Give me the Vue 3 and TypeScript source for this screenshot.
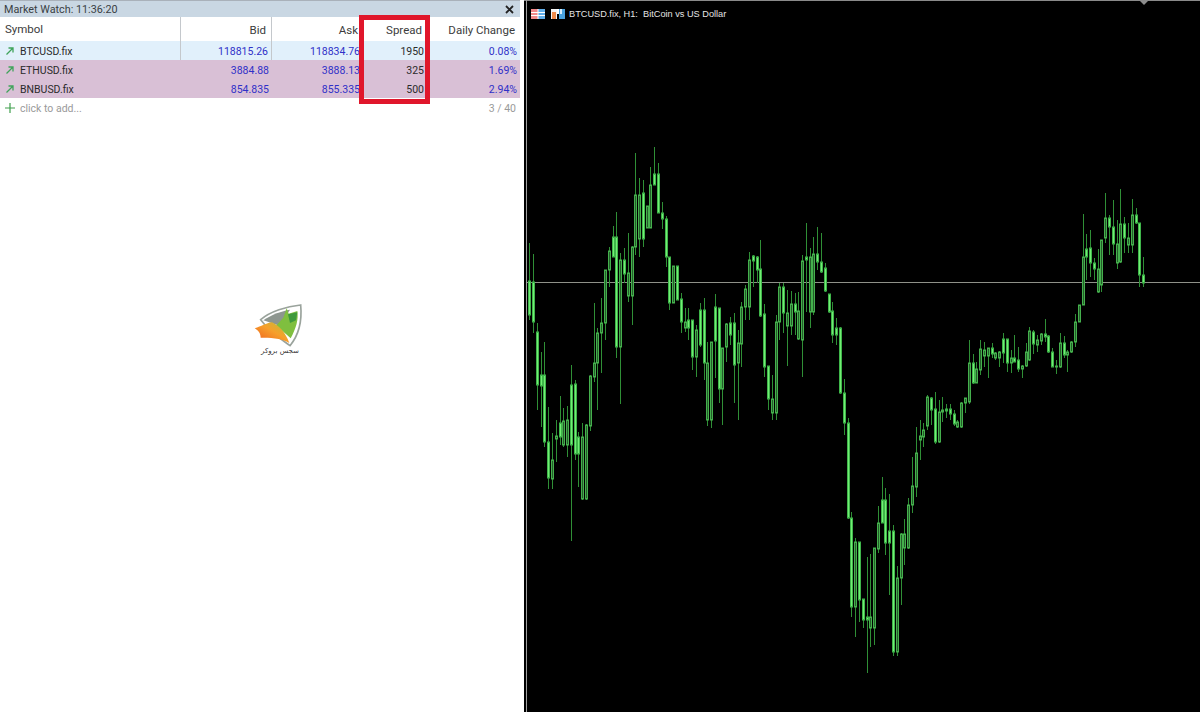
<template>
  <div class="page">
    <section class="watch">
      <div class="title-bar">
        <span>Market Watch: 11:36:20</span>
        <svg class="close" width="9" height="9" viewBox="0 0 9 9"><path d="M1 1l7 7M8 1l-7 7" /></svg>
      </div>

      <div class="grid head">
        <div class="cell sym">Symbol</div>
        <div class="cell num">Bid</div>
        <div class="cell num">Ask</div>
        <div class="cell num">Spread</div>
        <div class="cell num">Daily Change</div>
      </div>

      <div v-for="row in rows" :key="row.symbol" class="grid row" :class="{ active: row.active }">
        <div class="cell sym">
          <svg class="arrow" width="10" height="10" viewBox="0 0 10 10"><path d="M1.5 8.5L8 2M3.5 2H8v4.5" /></svg>
          {{ row.symbol }}
        </div>
        <div class="cell num blue">{{ row.bid }}</div>
        <div class="cell num blue">{{ row.ask }}</div>
        <div class="cell num">{{ row.spread }}</div>
        <div class="cell num blue">{{ row.change }}</div>
      </div>

      <div class="add-row">
        <span class="add-label">
          <svg class="plus" width="10" height="10" viewBox="0 0 10 10"><path d="M5 0v10M0 5h10" /></svg>
          click to add...
        </span>
        <span>3 / 40</span>
      </div>

      <div class="highlight"></div>

      <div class="logo">
        <svg width="80" height="52" viewBox="0 0 240 156">
          <defs>
            <linearGradient id="wing" x1="0" y1="1" x2="1" y2="0">
              <stop offset="0" stop-color="#ee5a1c" />
              <stop offset="0.55" stop-color="#f6a02c" />
              <stop offset="1" stop-color="#b7c23a" />
            </linearGradient>
          </defs>
          <path d="M62 74C90 50 140 34 182 30C186 72 178 118 150 152C120 130 90 112 62 74Z" fill="#fff" stroke="#9aa39c" stroke-width="5" />
          <path d="M70 76C95 58 125 48 150 44L118 92Z" fill="#8d968f" />
          <path d="M130 68L140 40L146 56L172 48C176 74 168 100 152 130C138 116 122 104 108 92Z" fill="#7fbf3f" />
          <path d="M144 58L172 52L168 76L150 84Z" fill="#3f9a3c" />
          <path d="M44 100C64 94 78 84 96 82C118 92 136 112 148 144C122 128 88 128 62 128C62 114 54 106 44 100Z" fill="url(#wing)" />
        </svg>
        <span class="logo-text">سجس بروکر</span>
      </div>
    </section>

    <section class="chart">
      <svg class="candles" width="676" height="712" viewBox="524 0 676 712">
        <line x1="526.5" y1="0" x2="526.5" y2="712" class="edge-line" />
        <line x1="527" y1="282.5" x2="1200" y2="282.5" class="price-line" />
        <g v-for="c in candles" :key="c.x">
          <line :x1="c.x" :x2="c.x" :y1="c.high" :y2="c.low" class="wick" />
          <rect
            :x="c.x - 1"
            :y="c.top"
            width="2"
            :height="c.height"
            :class="c.down ? 'body-down' : 'body-up'"
          />
        </g>
        <path d="M1139 0h10l-5 5z" fill="#8c8c8c" />
      </svg>

      <div class="chart-title">
        <svg width="14" height="10" viewBox="0 0 14 10">
          <rect x="0" y="0" width="7" height="10" fill="#f08a8a" />
          <rect x="7" y="0" width="7" height="10" fill="#62aee8" />
          <path d="M0 3.5h14M0 6.5h14M7 0v10" stroke="#fff" />
        </svg>
        <svg width="14" height="10" viewBox="0 0 14 10">
          <rect x="0" y="0" width="6" height="10" fill="#f4f4f4" />
          <rect x="8" y="0" width="6" height="10" fill="#4aa3e0" />
          <rect x="1" y="3" width="4" height="7" fill="#ee8a4a" />
          <rect x="6" y="0" width="2" height="5" fill="#fff" />
          <rect x="9" y="0" width="2" height="5" fill="#d8eefb" />
        </svg>
        <span>BTCUSD.fix, H1:&nbsp; BitCoin vs US Dollar</span>
      </div>
    </section>
  </div>
</template>

<script setup lang="ts">
interface Row {
  symbol: string;
  bid: string;
  ask: string;
  spread: string;
  change: string;
  active?: boolean;
}

const rows: Row[] = [
  { symbol: 'BTCUSD.fix', bid: '118815.26', ask: '118834.76', spread: '1950', change: '0.08%', active: true },
  { symbol: 'ETHUSD.fix', bid: '3884.88', ask: '3888.13', spread: '325', change: '1.69%' },
  { symbol: 'BNBUSD.fix', bid: '854.835', ask: '855.335', spread: '500', change: '2.94%' },
];

// high, body top, body bottom, low, read off the chart
const raw: number[][] = [
  [243, 281, 315, 320], [254, 282, 322, 333], [323, 332, 385, 410], [352, 375, 386, 427], [342, 375, 442, 447],
  [407, 442, 478, 489], [433, 460, 479, 489], [420, 436, 439, 462], [396, 423, 437, 445], [408, 421, 445, 447],
  [406, 420, 445, 457], [365, 385, 445, 541], [380, 384, 454, 460], [432, 437, 454, 487], [423, 437, 499, 500],
  [424, 425, 499, 500], [375, 376, 426, 431], [303, 363, 377, 382], [328, 333, 363, 410], [298, 323, 333, 373],
  [270, 270, 323, 340], [247, 251, 270, 287], [226, 237, 257, 250], [212, 237, 347, 358], [253, 260, 347, 404],
  [248, 260, 274, 283], [233, 273, 296, 302], [246, 247, 296, 325], [153, 195, 247, 255], [178, 195, 239, 257],
  [180, 193, 239, 247], [206, 206, 228, 228], [167, 185, 228, 228], [147, 174, 185, 185], [163, 174, 213, 213],
  [202, 213, 219, 229], [216, 219, 257, 267], [257, 257, 303, 310], [266, 266, 303, 303], [266, 266, 300, 300],
  [293, 299, 322, 333], [308, 322, 328, 332], [308, 320, 328, 340], [320, 320, 357, 370], [325, 330, 357, 377],
  [303, 310, 345, 347], [298, 310, 363, 380], [342, 363, 420, 426], [342, 342, 420, 428], [294, 307, 341, 378],
  [308, 308, 389, 403], [348, 348, 389, 425], [323, 324, 347, 362], [317, 323, 335, 345], [313, 323, 365, 403],
  [330, 363, 343, 420], [302, 307, 344, 367], [285, 289, 307, 320], [252, 260, 307, 320], [255, 256, 261, 287],
  [256, 257, 270, 283], [240, 269, 316, 317], [304, 314, 367, 377], [366, 366, 399, 410], [375, 399, 413, 420],
  [315, 322, 413, 420], [283, 287, 322, 340], [283, 287, 313, 333], [290, 313, 326, 366], [291, 304, 326, 335],
  [293, 304, 312, 335], [292, 311, 339, 340], [255, 261, 340, 377], [223, 257, 260, 312], [248, 257, 312, 328],
  [237, 254, 312, 315], [227, 254, 262, 270], [233, 262, 272, 273], [263, 268, 291, 292], [294, 294, 312, 313],
  [302, 311, 335, 343], [318, 328, 335, 345], [327, 328, 393, 394], [379, 393, 423, 435], [418, 423, 518, 519],
  [512, 518, 607, 617], [538, 542, 607, 637], [542, 542, 600, 622], [599, 599, 620, 628], [557, 617, 620, 673],
  [554, 617, 628, 647], [548, 548, 628, 645], [506, 523, 549, 553], [477, 500, 523, 523], [488, 500, 543, 555],
  [494, 531, 543, 595], [525, 531, 652, 656], [566, 578, 652, 656], [533, 534, 578, 605], [519, 534, 548, 565],
  [498, 505, 548, 549], [457, 486, 505, 513], [427, 453, 487, 497], [420, 436, 440, 460], [423, 430, 437, 447],
  [395, 397, 426, 430], [397, 398, 410, 425], [392, 409, 442, 444], [400, 412, 442, 443], [397, 410, 412, 422],
  [404, 409, 411, 418], [404, 409, 414, 420], [410, 414, 424, 426], [420, 422, 427, 428], [402, 403, 427, 428],
  [398, 398, 403, 413], [340, 363, 402, 404], [354, 363, 383, 384], [362, 369, 383, 383], [340, 349, 370, 375],
  [342, 350, 356, 367], [348, 348, 356, 378], [343, 348, 354, 358], [352, 353, 358, 360], [351, 352, 358, 367],
  [333, 339, 353, 363], [339, 339, 363, 372], [350, 358, 363, 373], [335, 358, 362, 362], [347, 360, 369, 372],
  [365, 366, 369, 378], [343, 352, 366, 367], [327, 331, 360, 361], [330, 332, 344, 354], [335, 340, 345, 352],
  [333, 334, 341, 345], [319, 334, 337, 342], [335, 336, 352, 353], [348, 352, 367, 367], [360, 366, 367, 374],
  [333, 343, 367, 368], [336, 343, 355, 358], [350, 352, 355, 372], [341, 342, 352, 353], [314, 322, 342, 347],
  [305, 305, 322, 322], [214, 257, 305, 305], [234, 249, 257, 280], [230, 248, 263, 277], [258, 263, 269, 280],
  [249, 269, 292, 293], [240, 240, 285, 292], [193, 218, 238, 243], [215, 218, 227, 255], [200, 227, 244, 255],
  [220, 244, 263, 269], [189, 224, 262, 263], [217, 224, 238, 253], [223, 238, 245, 253], [199, 215, 245, 253],
  [208, 215, 223, 224], [223, 223, 275, 287], [257, 275, 283, 287],
];

const candles = raw.map((c, i) => {
  const [high, a, b, low] = c;
  const top = Math.min(a, b);
  const bottom = Math.max(a, b);
  const next = raw[i + 1];
  return {
    x: Math.floor(529.7 + i * 3.79) + 0.5,
    high: Math.min(high, top),
    low: Math.max(low, bottom),
    top,
    height: Math.max(bottom - top, 1),
    // a falling bar ends where the next one opens
    down: next ? Math.abs(bottom - next[1]) <= Math.abs(top - next[2]) : true,
  };
});
</script>

<style>
html,
body {
  background: #000;
}
</style>

<style scoped>
.page {
  display: flex;
  width: 1200px;
  height: 712px;
  overflow: hidden;
  font-family: Roboto, "Noto Sans", sans-serif;
}

.watch {
  position: relative;
  width: 524px;
  height: 712px;
  background: #fff;
  color: #2b2b2b;
  font-size: 10.5px;
}

.title-bar {
  display: flex;
  align-items: center;
  justify-content: space-between;
  box-sizing: border-box;
  width: 520px;
  height: 17px;
  padding: 0 6px 0 4px;
  border-top: 1px solid #a9b1ba;
  background: #c9d7e3;
  color: #3a3f44;
  font-size: 10.8px;
}

.close path {
  fill: none;
  stroke: #222;
  stroke-width: 1.8;
}

.grid {
  display: grid;
  grid-template-columns: 181px 91px 91px 64px 93px;
  width: 520px;
}

.head {
  height: 24px;
  line-height: 26px;
  font-size: 11.5px;
  color: #3c3c3c;
}

.head .cell {
  height: 24px;
  padding: 0 5px;
}

.head .cell:nth-child(-n + 2),
.active .cell:nth-child(-n + 2) {
  border-right: 1px solid #c4c8cc;
}

.row {
  height: 19px;
  background: #d9c0d6;
}

.row.active {
  background: #e1f0fb;
}

.cell {
  box-sizing: border-box;
  white-space: nowrap;
}

.row .cell {
  height: 19px;
  padding: 2px 3px 0 0;
  line-height: 17px;
}

.sym {
  display: flex;
  align-items: center;
}

.row .sym {
  padding-left: 5px;
}

.arrow {
  margin: -2px 5px 0 0;
}

.arrow path {
  fill: none;
  stroke: #3fa35a;
  stroke-width: 1.3;
}

.num {
  text-align: right;
}

.blue {
  color: #3030c8;
}

.add-row {
  display: flex;
  align-items: center;
  justify-content: space-between;
  box-sizing: border-box;
  width: 520px;
  height: 20px;
  padding: 0 4px 0 5px;
  color: #9a9a9a;
}

.add-label {
  display: flex;
  align-items: center;
  gap: 5px;
}

.plus path {
  fill: none;
  stroke: #3f9f4d;
  stroke-width: 1.2;
}

.highlight {
  position: absolute;
  top: 15px;
  left: 359px;
  box-sizing: border-box;
  width: 71px;
  height: 89px;
  border: 5px solid #e0162b;
}

.logo {
  position: absolute;
  top: 295px;
  left: 240px;
  display: flex;
  flex-direction: column;
  align-items: center;
  width: 80px;
}

.logo-text {
  font-family: "DejaVu Sans", sans-serif;
  font-size: 7px;
  line-height: 9px;
  color: #333;
}

.chart {
  position: relative;
  flex: 1;
  background: #000;
  border-top: 1px solid #8a8a8a;
  box-sizing: border-box;
}

.candles {
  position: absolute;
  top: -1px;
  left: 0;
  display: block;
}

.edge-line {
  stroke: #a0a0a0;
  stroke-width: 1;
}

.price-line {
  stroke: #8f9189;
  stroke-width: 1;
}

.wick {
  stroke: #2f8f36;
  stroke-width: 1;
}

.body-down {
  fill: #72ee74;
  stroke: #3fb54a;
  stroke-width: 1;
}

.body-up {
  fill: #245e2a;
  stroke: #45b04d;
  stroke-width: 1;
}

.chart-title {
  position: absolute;
  top: 7px;
  left: 7px;
  display: flex;
  align-items: center;
  gap: 6px;
  font-family: "Liberation Sans", sans-serif;
  font-size: 9.2px;
  line-height: 12px;
  color: #e4e4e4;
}

.chart-title span {
  margin-left: -2px;
}
</style>
